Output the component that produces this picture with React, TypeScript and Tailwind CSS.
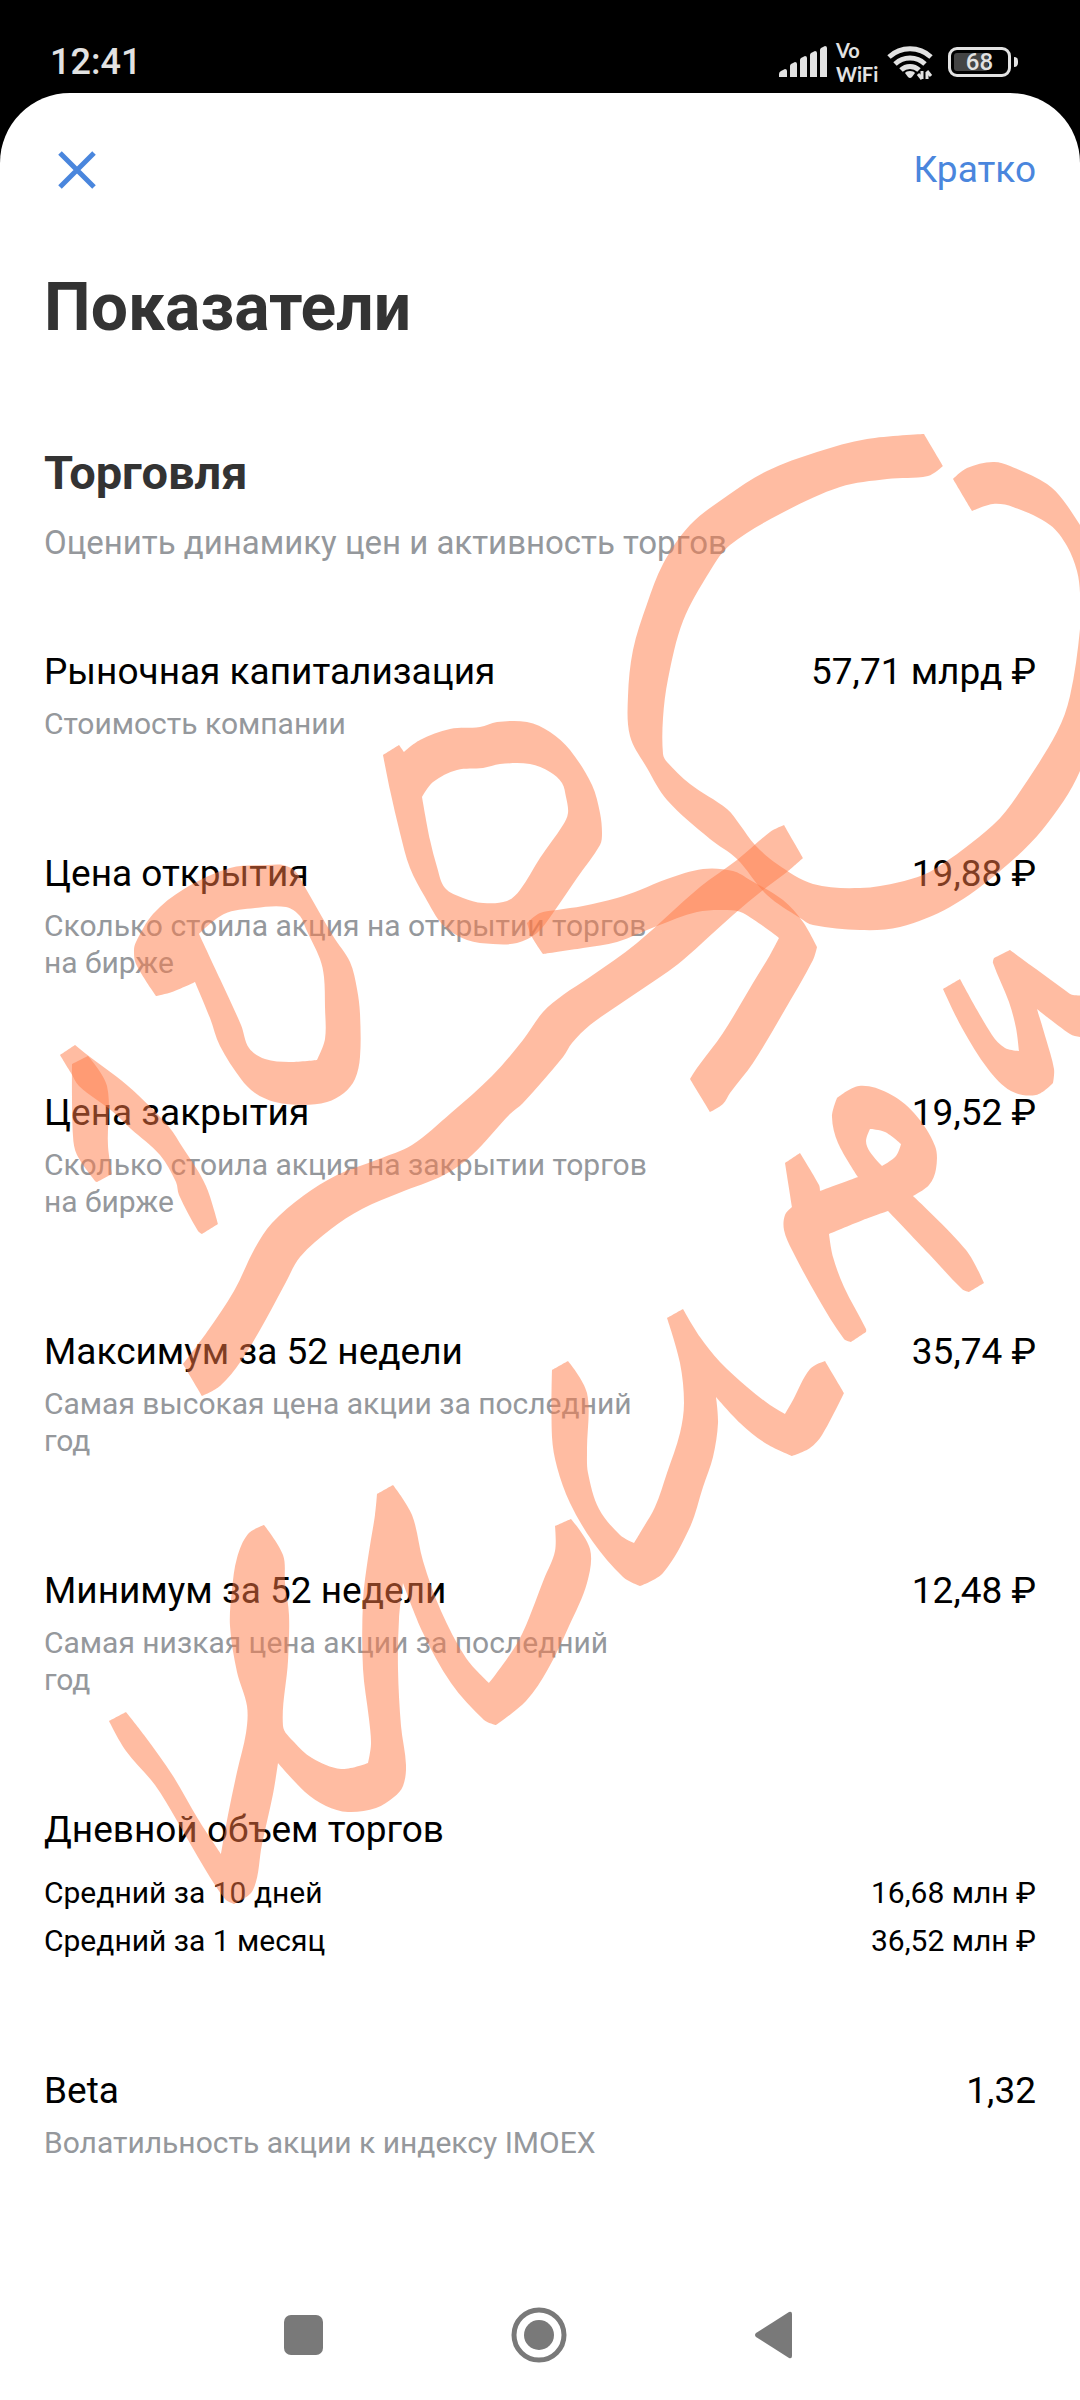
import React from 'react';

type Point = [number, number];

interface Metric {
  title: string;
  hint?: string;
  value?: string;
  details?: { label: string; value: string }[];
}

const METRICS: Metric[] = [
  { title: 'Рыночная капитализация', hint: 'Стоимость компании', value: '57,71 млрд ₽' },
  { title: 'Цена открытия', hint: 'Сколько стоила акция на открытии торгов на бирже', value: '19,88 ₽' },
  { title: 'Цена закрытия', hint: 'Сколько стоила акция на закрытии торгов на бирже', value: '19,52 ₽' },
  { title: 'Максимум за 52 недели', hint: 'Самая высокая цена акции за последний год', value: '35,74 ₽' },
  { title: 'Минимум за 52 недели', hint: 'Самая низкая цена акции за последний год', value: '12,48 ₽' },
  {
    title: 'Дневной объем торгов',
    details: [
      { label: 'Средний за 10 дней', value: '16,68 млн ₽' },
      { label: 'Средний за 1 месяц', value: '36,52 млн ₽' },
    ],
  },
  { title: 'Beta', hint: 'Волатильность акции к индексу IMOEX', value: '1,32' },
];

// Marker strokes: every stroke is a list of closed outlines (outer edge, then holes)
const STROKES: Point[][][] = [
  [[[72,1064],[88,1056],[107,1086],[108,1146],[112,1174],[97,1182],[95,1181],[77,1155],[73,1136]]],
  [[[60,1055],[75,1045],[90,1057],[117,1077],[138,1095],[169,1127],[183,1148],[198,1171],[208,1191],[218,1224],[202,1234],[198,1231],[179,1195],[176,1182],[160,1155],[131,1129],[112,1111],[79,1086],[71,1073]]],
  [
    [[156,996],[136,964],[134,950],[136,942],[153,914],[184,889],[230,868],[268,865],[283,865],[295,871],[306,889],[333,936],[350,962],[357,989],[360,1014],[360,1057],[355,1079],[344,1093],[327,1102],[303,1105],[275,1102],[255,1093],[241,1079],[220,1046],[210,1018],[195,982],[172,992]],
    [[199,934],[224,914],[255,908],[286,907],[300,916],[306,929],[320,959],[324,977],[325,1007],[325,1039],[317,1060],[289,1062],[265,1059],[249,1048],[241,1025],[220,979]],
  ],
  [
    [[383,755],[399,745],[404,752],[420,740],[450,729],[480,727],[497,722],[527,722],[550,732],[570,750],[592,785],[600,813],[602,833],[600,845],[577,878],[553,913],[537,933],[517,943],[493,944],[467,940],[443,925],[425,897],[410,868],[400,833],[390,790]],
    [[422,797],[433,782],[457,770],[483,768],[500,764],[530,764],[550,772],[562,783],[566,797],[568,813],[563,825],[540,858],[520,890],[507,901],[483,903],[463,898],[445,888],[437,867],[430,840]],
  ],
  [[[543,954],[532,937],[527,923],[540,913],[557,910],[583,906],[617,898],[640,890],[667,879],[703,869],[733,871],[750,880],[783,900],[803,922],[817,947],[813,960],[783,1013],[753,1063],[730,1093],[723,1104],[710,1112],[690,1079],[697,1068],[723,1033],[753,983],[770,955],[779,938],[743,913],[727,910],[697,912],[657,926],[617,942],[583,948]]],
  [[[784,825],[803,858],[787,872],[763,890],[733,915],[683,960],[663,975],[623,1002],[590,1025],[572,1043],[563,1057],[523,1103],[510,1114],[472,1155],[444,1175],[399,1193],[362,1209],[331,1229],[300,1257],[286,1282],[265,1321],[241,1361],[220,1386],[202,1396],[183,1364],[207,1332],[234,1291],[255,1248],[272,1223],[303,1196],[337,1175],[379,1159],[412,1145],[451,1113],[492,1076],[523,1040],[543,1012],[563,995],[590,977],[637,943],[700,887],[737,860],[770,832]]],
  [[[924,434],[943,466],[928,476],[887,479],[840,487],[780,514],[730,545],[710,571],[683,621],[668,679],[663,718],[663,754],[667,762],[690,784],[727,809],[740,825],[755,845],[777,864],[813,884],[860,888],[900,882],[933,870],[993,825],[1017,796],[1057,732],[1070,696],[1080,629],[1080,593],[1077,571],[1067,546],[1050,525],[1013,507],[993,504],[972,511],[953,479],[967,468],[993,462],[1010,466],[1047,484],[1063,500],[1080,525],[1110,570],[1120,650],[1080,771],[1043,829],[1000,871],[950,907],[900,927],[860,930],[813,925],[800,918],[767,895],[737,859],[710,839],[667,800],[647,768],[630,736],[628,696],[633,650],[647,604],[663,564],[690,525],[727,496],[767,471],[817,452],[867,439]]],
  [[[943,989],[960,979],[992,1035],[1005,1048],[1019,1051],[1016,1028],[1009,1002],[993,963],[994,958],[1010,950],[1036,969],[1066,991],[1073,995],[1090,995],[1090,1039],[1080,1037],[1070,1034],[1037,1009],[1046,1039],[1054,1069],[1053,1083],[1036,1095],[1011,1091],[988,1069],[962,1028]]],
  [
    [[785,1163],[800,1153],[819,1185],[820,1191],[858,1177],[838,1143],[832,1117],[837,1098],[859,1086],[888,1093],[914,1113],[935,1146],[936,1169],[929,1185],[913,1196],[966,1250],[984,1283],[969,1292],[962,1289],[929,1254],[888,1211],[863,1220],[829,1234],[833,1257],[844,1287],[866,1329],[866,1332],[851,1342],[844,1339],[818,1298],[792,1250],[784,1230],[785,1215],[792,1207]],
    [[870,1129],[885,1132],[901,1144],[896,1156],[882,1166],[870,1152],[866,1141]],
  ],
  [[[552,1370],[568,1361],[587,1393],[587,1450],[588,1473],[599,1509],[620,1535],[634,1543],[640,1533],[655,1507],[667,1473],[680,1433],[684,1403],[680,1363],[667,1318],[683,1309],[700,1337],[720,1362],[747,1387],[770,1405],[785,1414],[793,1400],[810,1369],[825,1361],[844,1393],[822,1435],[810,1448],[792,1456],[765,1443],[740,1423],[716,1397],[718,1423],[713,1457],[703,1487],[690,1527],[663,1573],[640,1586],[623,1577],[593,1542],[570,1503],[557,1467],[552,1437]]],
  [[[109,1721],[126,1712],[144,1735],[173,1776],[198,1819],[221,1854],[228,1815],[237,1772],[246,1733],[247,1706],[237,1672],[230,1626],[232,1590],[237,1558],[248,1534],[264,1525],[283,1555],[285,1583],[289,1615],[288,1661],[283,1726],[294,1742],[312,1758],[341,1769],[368,1763],[371,1744],[369,1719],[363,1669],[363,1601],[368,1558],[375,1515],[377,1494],[393,1485],[412,1515],[423,1561],[441,1611],[466,1658],[489,1683],[519,1640],[544,1579],[555,1551],[555,1526],[571,1519],[590,1549],[587,1583],[569,1626],[548,1669],[526,1701],[496,1725],[484,1720],[451,1683],[423,1633],[403,1583],[399,1619],[398,1669],[401,1726],[406,1765],[403,1786],[394,1797],[376,1808],[348,1812],[326,1806],[305,1792],[278,1763],[273,1794],[262,1844],[253,1890],[234,1904],[225,1899],[205,1869],[176,1819],[155,1785],[126,1751]]],
];

// Rounds gentle bends of an outline and leaves the sharp corners alone
const toPath = (points: Point[]) => {
  const n = points.length;
  const dirs = points.map(([x, y], i) => {
    const [px, py] = points[(i + n - 1) % n];
    const [nx, ny] = points[(i + 1) % n];
    const a = Math.atan2(y - py, x - px);
    const b = Math.atan2(ny - y, nx - x);
    const turn = Math.abs(Math.atan2(Math.sin(b - a), Math.cos(b - a)));
    if (turn > 0.8) return [0, 0];
    const len = Math.hypot(nx - px, ny - py) || 1;
    return [(nx - px) / len, (ny - py) / len];
  });
  let d = `M${points[0][0]} ${points[0][1]}`;
  for (let i = 0; i < n; i++) {
    const j = (i + 1) % n;
    const [x, y] = points[i];
    const [nx, ny] = points[j];
    const k = Math.hypot(nx - x, ny - y) / 3;
    d += `C${x + dirs[i][0] * k} ${y + dirs[i][1] * k} ${nx - dirs[j][0] * k} ${ny - dirs[j][1] * k} ${nx} ${ny}`;
  }
  return d + 'Z';
};

const MarkerDrawing: React.FC = () => (
  <svg
    viewBox="0 0 1080 2400"
    className="pointer-events-none absolute top-0 left-0 w-full"
    fill="#ff7945"
    fillOpacity={0.5}
    fillRule="evenodd"
    aria-hidden="true"
  >
    {STROKES.map((outlines, i) => (
      <path key={i} d={outlines.map(toPath).join('')} />
    ))}
  </svg>
);

const StatusBar: React.FC = () => (
  <header className="flex h-[93px] items-center justify-between pt-[30px] pr-[62px] pl-[50px] text-[#e2e2e2]">
    <time className="text-[36px] leading-[42px] font-medium">12:41</time>
    <div className="flex items-center">
      <svg width="49" height="32" viewBox="0 0 49 32" fill="currentColor" aria-hidden="true">
        <path d="M0 31v-3q0-2 2-3l4-2q2 0 2 2v6zM11 31V20q0-1 1-2l4-2q2 0 2 2v13zM21 31V14q0-1 1-2l4-2q2 0 2 2v19zM31 31V9q0-1 1-2l4-2q2 0 2 2v24zM41 31V4q0-1 1-2l4-2q2 0 2 2v29z" />
      </svg>
      <div className="ml-2 flex w-[43px] flex-col font-[Lato,sans-serif] text-[20px] leading-[24px] font-bold">
        <span>Vo</span>
        <span>WiFi</span>
      </div>
      <svg className="ml-2" width="48" height="36" viewBox="0 0 48 36" aria-hidden="true">
        <g fill="none" stroke="currentColor" strokeWidth="5">
          <path d="M2 13a31 31 0 0 1 42 0" />
          <path d="M8 20a22 22 0 0 1 30 0" />
          <path d="M14 26a13 13 0 0 1 18 0" />
        </g>
        <path d="M23 27q4 0 5 2l-3 4q-2 2-4 0l-3-4q1-2 5-2z" fill="currentColor" />
        <path d="M35 27v8M40 35v-7M35 35l-4-5M40 27l4 5" stroke="currentColor" strokeWidth="3" />
      </svg>
      <div className="ml-[13px] flex items-center gap-[3px]">
        <div className="relative flex h-[30px] w-[63px] items-center justify-center rounded-[9px] border-3 border-[#e2e2e2]">
          <span className="absolute top-[3px] bottom-[3px] left-[3px] w-[34px] rounded-[3px] bg-[#444]" />
          <span className="relative text-[24px] leading-[24px] font-medium">68</span>
        </div>
        <span className="h-[10px] w-1 rounded-r-sm bg-[#e2e2e2]" />
      </div>
    </div>
  </header>
);

const MetricRow: React.FC<{ metric: Metric }> = ({ metric }) => (
  <li>
    <div className="flex items-start justify-between text-[37px] leading-[46px]">
      <div className="w-[62%]">
        <h3>{metric.title}</h3>
        {metric.hint && <p className="mt-[10px] text-[30px] leading-[37px] text-[#95989c]">{metric.hint}</p>}
      </div>
      {metric.value && <span className="whitespace-nowrap">{metric.value}</span>}
    </div>
    {metric.details && (
      <dl className="mt-[21px] flex flex-col gap-[11px] text-[30px] leading-[37px]">
        {metric.details.map((row) => (
          <div key={row.label} className="flex justify-between">
            <dt>{row.label}</dt>
            <dd>{row.value}</dd>
          </div>
        ))}
      </dl>
    )}
  </li>
);

const NavBar: React.FC = () => (
  <nav className="mt-auto flex justify-center gap-[176px] pb-[35px] text-[#797979]">
    <button type="button" aria-label="Недавние">
      <svg width="60" height="60" viewBox="0 0 60 60" fill="currentColor">
        <rect x="10" y="10" width="39" height="40" rx="7" />
      </svg>
    </button>
    <button type="button" aria-label="Домой">
      <svg width="60" height="60" viewBox="0 0 60 60" fill="currentColor">
        <circle cx="29" cy="30" r="25" fill="none" stroke="currentColor" strokeWidth="5" />
        <circle cx="29" cy="30" r="15" />
      </svg>
    </button>
    <button type="button" aria-label="Назад">
      <svg width="60" height="60" viewBox="0 0 60 60" fill="currentColor">
        <path d="M10 28L43 7q3-1 3 2v42q0 3-3 2L10 32q-2-2 0-4z" />
      </svg>
    </button>
  </nav>
);

export default function App() {
  return (
    <div className="relative flex min-h-screen flex-col overflow-hidden bg-black font-[Roboto,sans-serif]">
      <StatusBar />
      <main className="flex grow flex-col rounded-t-[70px] bg-white text-black">
        <div className="px-[44px] pt-[54px]">
          <div className="flex items-center justify-between text-[#4a86dd]">
            <button type="button" aria-label="Закрыть">
              <svg width="66" height="46" viewBox="0 0 66 46" fill="none" stroke="currentColor" strokeWidth="5">
                <path d="M16 6l34 34M50 6L16 40" />
              </svg>
            </button>
            <button type="button" className="text-[37px] leading-[46px]">Кратко</button>
          </div>
          <h1 className="mt-[76px] text-[66px] leading-[78px] font-bold text-[#333]">Показатели</h1>
          <section className="mt-[99px]">
            <h2 className="text-[47px] leading-[54px] font-bold text-[#333]">Торговля</h2>
            <p className="mt-[23px] text-[33px] leading-[40px] text-[#95989c]">
              Оценить динамику цен и активность торгов
            </p>
            <ul className="mt-[86px] flex flex-col gap-[109px]">
              {METRICS.map((metric) => (
                <MetricRow key={metric.title} metric={metric} />
              ))}
            </ul>
          </section>
        </div>
        <NavBar />
      </main>
      <MarkerDrawing />
    </div>
  );
}
